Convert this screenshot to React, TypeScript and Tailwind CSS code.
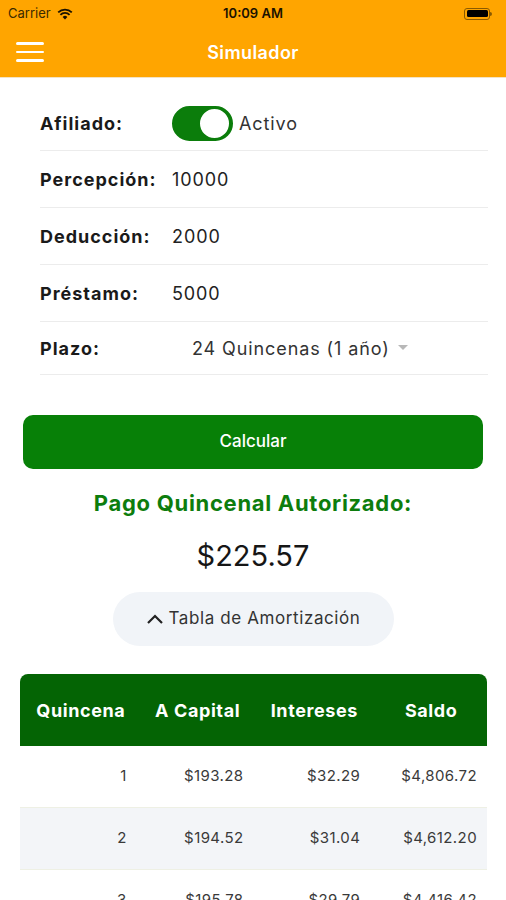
import React from "react";

const rows = [
  ["1", "$193.28", "$32.29", "$4,806.72"],
  ["2", "$194.52", "$31.04", "$4,612.20"],
  ["3", "$195.78", "$29.79", "$4,416.42"],
];

function FormRow({ label, children, h = "h-[57px]" }: { label: string; children: React.ReactNode; h?: string }) {
  return (
    <div className={`flex items-center ${h} border-b border-[#ececec]`}>
      <div className="w-[132px] text-[18px] font-bold text-[#1a1a1a] tracking-[1px]">{label}</div>
      <div className="flex-1 flex items-center text-[18px] text-[#222] tracking-[0.9px]">{children}</div>
    </div>
  );
}

export default function App() {
  return (
    <div className="w-[506px] h-[900px] overflow-hidden bg-white" style={{ fontFamily: "Inter, 'Noto Sans', sans-serif" }}>
      {/* Status + nav */}
      <div className="bg-[#ffa500]">
        <div className="relative h-[27px] flex items-center px-[8px]">
          <div className="flex items-center gap-[6px] text-[13px] text-[#3a2a00]">
            <span>Carrier</span>
            <svg width="16" height="12" viewBox="0 0 16 12">
              <path d="M8 11.5 L5.6 8.9 A3.4 3.4 0 0 1 10.4 8.9 Z" fill="#1a1200" />
              <path d="M3.4 6.8 A6.4 6.4 0 0 1 12.6 6.8" stroke="#1a1200" strokeWidth="1.8" fill="none" />
              <path d="M1.2 4.4 A9.6 9.6 0 0 1 14.8 4.4" stroke="#1a1200" strokeWidth="1.8" fill="none" />
            </svg>
          </div>
          <div className="absolute left-0 right-0 text-center text-[13px] font-semibold text-[#1a1200]">10:09 AM</div>
          <div className="ml-auto flex items-center mr-[6px]">
            <div className="w-[26px] h-[12px] rounded-[3px] border border-[#8a5a00] p-[1.5px]">
              <div className="w-full h-full bg-black rounded-[1.5px]" />
            </div>
            <div className="w-[2px] h-[4px] bg-[#8a5a00] rounded-r-sm" />
          </div>
        </div>
        <div className="relative h-[51px] flex items-center border-b border-[#f3e3c5]">
          <div className="pl-[16px] flex flex-col gap-[6px]">
            <div className="w-[28px] h-[2.5px] bg-white rounded" />
            <div className="w-[28px] h-[2.5px] bg-white rounded" />
            <div className="w-[28px] h-[2.5px] bg-white rounded" />
          </div>
          <div className="absolute left-0 right-0 text-center text-[18px] font-semibold text-white tracking-[0.4px] pointer-events-none">Simulador</div>
        </div>
      </div>

      {/* Form */}
      <div className="pl-[40px] pt-[18px]">
        <div className="w-[448px]">
          <FormRow label="Afiliado:" h="h-[55px]">
            <div className="w-[61px] h-[35px] rounded-full bg-[#0b7d0b] border-[2px] border-[#0b7d0b] flex items-center justify-end">
              <div className="w-[33px] h-[33px] rounded-full bg-white border-[2px] border-[#0b7d0b]" />
            </div>
            <span className="ml-[6px] text-[#333]">Activo</span>
          </FormRow>
          <FormRow label="Percepción:">10000</FormRow>
          <FormRow label="Deducción:">2000</FormRow>
          <FormRow label="Préstamo:">5000</FormRow>
          <FormRow label="Plazo:" h="h-[53px]">
            <span className="ml-[20px] text-[#333]">24 Quincenas (1 año)</span>
            <svg className="ml-[8px]" width="10" height="6" viewBox="0 0 10 6"><path d="M0 0 L10 0 L5 5 Z" fill="#b8b8b8" /></svg>
          </FormRow>
        </div>
      </div>

      {/* Button */}
      <div className="px-[23px] pt-[40px]">
        <div className="h-[54px] rounded-[10px] bg-[#078007] flex items-center justify-center text-white text-[17px] font-medium">Calcular</div>
      </div>

      <div className="mt-[20px] text-center text-[22px] font-bold text-[#0d7d0d] leading-[28px] tracking-[0.7px]">Pago Quincenal Autorizado:</div>
      <div className="mt-[22px] text-center text-[29px] text-[#161616] leading-[34px]">$225.57</div>

      <div className="flex justify-center mt-[19px]">
        <div className="w-[281px] h-[54px] rounded-full bg-[#f1f4f8] flex items-center justify-center gap-[5px] text-[17px] text-[#333] tracking-[0.6px]">
          <svg width="18" height="12" viewBox="0 0 18 12"><path d="M2 10 L9 3 L16 10" stroke="#222" strokeWidth="2.2" fill="none" /></svg>
          <span>Tabla de Amortización</span>
        </div>
      </div>

      {/* Table */}
      <div className="ml-[20px] mr-[19px] mt-[28px]">
        <div className="grid grid-cols-4 h-[72px] bg-[#046404] rounded-t-[8px] text-white text-[18px] font-bold items-center tracking-[0.6px]">
          <div className="text-center pl-[5px]">Quincena</div>
          <div className="text-center pl-[5px]">A Capital</div>
          <div className="text-center pl-[5px]">Intereses</div>
          <div className="text-center pl-[5px]">Saldo</div>
        </div>
        {rows.map((r, i) => (
          <div key={i} className={`grid grid-cols-4 h-[62px] items-center text-[15px] text-[#3a3a3a] tracking-[0.4px] border-b border-[#eef0e4] ${i % 2 === 1 ? "bg-[#f3f5f8]" : "bg-white"}`}>
            {r.map((c, j) => (
              <div key={j} className="text-right pr-[10px]">{c}</div>
            ))}
          </div>
        ))}
      </div>
    </div>
  );
}
